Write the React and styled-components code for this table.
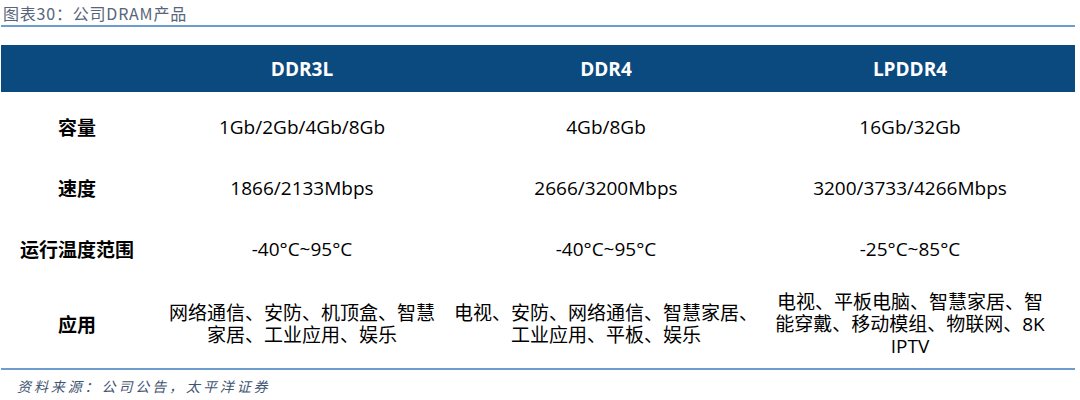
import React from "react";
import styled, { createGlobalStyle } from "styled-components";

const Global = createGlobalStyle`
  html, body { margin: 0; padding: 0; background: #fff; }
  body { font-family: "Open Sans", "Noto Sans CJK SC", sans-serif; }
`;

const Page = styled.div`
  width: 1080px;
  height: 400px;
  padding: 0 5px 0 1px;
  box-sizing: border-box;
  display: flex;
  flex-direction: column;
`;

const Title = styled.div`
  height: 27px;
  padding-left: 2px;
  display: flex;
  align-items: center;
  font-family: "Noto Sans CJK SC", sans-serif;
  font-size: 16px;
  color: #56657a;
  letter-spacing: 0.8px;
  border-bottom: 2px solid #6d9ccf;
  box-sizing: border-box;
`;

const Table = styled.div`
  margin-top: 18px;
  display: grid;
  grid-template-columns: 152px 298px 310px 1fr;
  border-bottom: 2px solid #6d9ccf;
`;

const HeadCell = styled.div`
  height: 47px;
  background: #0b4a7f;
  color: #fff;
  font-weight: 700;
  font-size: 19px;
  display: flex;
  align-items: center;
  justify-content: center;
  padding: ${(p) => p.$pad || "0"};
`;

const Cell = styled.div`
  height: ${(p) => p.$h}px;
  display: flex;
  align-items: center;
  justify-content: center;
  text-align: center;
  font-size: 19px;
  line-height: 22px;
  color: #000;
  padding: ${(p) => p.$pad || "0"};
  margin-top: ${(p) => (p.$first ? 4 : 0)}px;
  box-sizing: border-box;
`;

const Label = styled(Cell)`
  font-family: "Noto Sans CJK SC", sans-serif;
  font-weight: 700;
`;

const Source = styled.div`
  padding: 6px 0 0 16px;
  font-family: "Noto Sans CJK SC", sans-serif;
  font-style: italic;
  font-size: 14px;
  letter-spacing: 2.9px;
  color: #3f5672;
`;

const pads = ["0", "0 8px", "0 1px", "0 24px 0 8px"];

const rows = [
  { label: "容量", h: 61, vals: ["1Gb/2Gb/4Gb/8Gb", "4Gb/8Gb", "16Gb/32Gb"] },
  { label: "速度", h: 61, vals: ["1866/2133Mbps", "2666/3200Mbps", "3200/3733/4266Mbps"] },
  { label: "运行温度范围", h: 61, vals: ["-40°C~95°C", "-40°C~95°C", "-25°C~85°C"] },
  {
    label: "应用",
    h: 89,
    vals: [
      "网络通信、安防、机顶盒、智慧家居、工业应用、娱乐",
      "电视、安防、网络通信、智慧家居、工业应用、平板、娱乐",
      "电视、平板电脑、智慧家居、智能穿戴、移动模组、物联网、8K IPTV",
    ],
  },
];

export default function App() {
  return (
    <>
      <Global />
      <Page>
        <Title>图表30：公司DRAM产品</Title>
        <Table>
          <HeadCell $pad={pads[0]} />
          <HeadCell $pad={pads[1]}>DDR3L</HeadCell>
          <HeadCell $pad={pads[2]}>DDR4</HeadCell>
          <HeadCell $pad={pads[3]}>LPDDR4</HeadCell>
          {rows.map((r, i) => (
            <React.Fragment key={r.label}>
              <Label $h={r.h} $first={i === 0}>{r.label}</Label>
              {r.vals.map((v, j) => (
                <Cell key={j} $h={r.h} $first={i === 0} $pad={pads[j + 1]}>
                  {v}
                </Cell>
              ))}
            </React.Fragment>
          ))}
        </Table>
        <Source>资料来源：公司公告，太平洋证券</Source>
      </Page>
    </>
  );
}
